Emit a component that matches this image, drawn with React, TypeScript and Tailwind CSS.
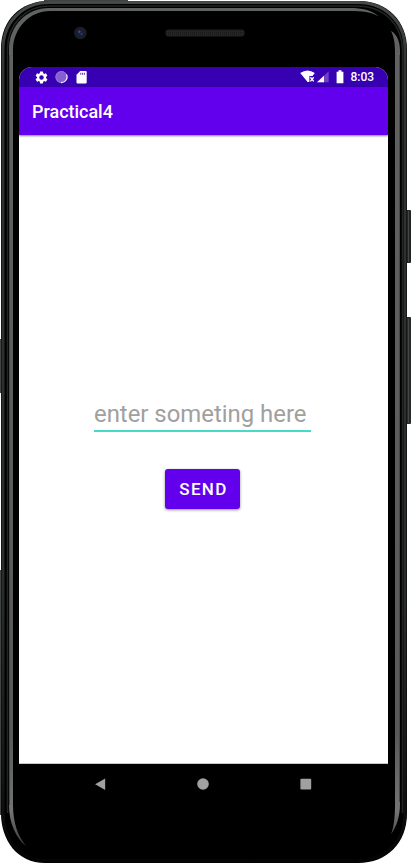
function DeviceFrame() {
  return (
    <svg className="absolute inset-0" width="411" height="863" viewBox="0 0 411 863" fill="none" aria-hidden="true">
      <defs>
        <linearGradient id="edge" x1="0" y1="0" x2="0" y2="863" gradientUnits="userSpaceOnUse">
          <stop offset="0" stopColor="#454948" />
          <stop offset=".08" stopColor="#303332" />
          <stop offset=".7" stopColor="#292c2b" />
          <stop offset=".9" stopColor="#151515" />
          <stop offset="1" stopColor="#030303" />
        </linearGradient>
        <linearGradient id="shine" x1="0" y1="0" x2="0" y2="863" gradientUnits="userSpaceOnUse">
          <stop offset="0" stopColor="#606362" />
          <stop offset=".85" stopColor="#595959" />
          <stop offset=".94" stopColor="#747474" />
          <stop offset="1" stopColor="#222" />
        </linearGradient>
        <pattern id="mesh" width="2" height="2" patternUnits="userSpaceOnUse">
          <rect width="2" height="2" fill="#242424" />
          <rect width="1" height="1" fill="#191919" />
        </pattern>
      </defs>
      <path d="M44 0H128V2H44zM0 339H1V393H0zM0 570H1V815H0z" fill="#414443" />
      <rect x="406" y="210" width="5" height="53" rx="1" fill="#222423" />
      <rect x="406" y="317" width="5" height="107" rx="1" fill="#282a29" />
      <path d="M408.5 211V262M408.5 319V423" stroke="#454746" />
      <path d="M1 48C1 20 21 1 48 1H359C387 1 407 21 407 49V813C407 843 387 863 358 863H45C17 863 1 840 1 813Z" fill="#000" />
      <path d="M3 813V49C3 22 23 2.5 49 2.5H358C385 2.5 405 22 405 49V813C405 842 386 860.5 358 860.5H45C19 860.5 3 839 3 813Z" stroke="url(#edge)" strokeWidth="3" />
      <path d="M7.5 813V49C7.5 24 26 6 49 6H356C384 6 402 24 402.5 50V813" stroke="#222524" strokeWidth="1.5" />
      <path d="M9 50C9 25 27 8 49 8H349C363 8 371 10 379 16.5C371 12 363 11 349 11H50C30 11 13 28 13 50V805C13 823 18 836 26 846C16 838 9 823 9 805Z" fill="url(#shine)" />
      <path d="M391 31C397 34 400 42 400 51V804C400 817 396 828 391 834C394 827 395 817 395 804V52C395 43 394 37 391 31Z" fill="url(#shine)" />
      <path d="M9.5 55V805M399.5 55V802" stroke="#484a49" />
      <circle cx="80.3" cy="33" r="6.3" fill="#1b1d1e" />
      <circle cx="80.3" cy="33" r="3.5" fill="#172044" />
      <circle cx="79.3" cy="31.8" r="1.2" fill="#364c85" />
      <circle cx="81.5" cy="34" r=".7" fill="#46588b" />
      <rect x="165.5" y="29.5" width="79" height="7" rx="3" fill="url(#mesh)" />
    </svg>
  );
}

function GearIcon() {
  return (
    <svg className="h-[15px] w-[15px]" viewBox="0 0 24 24" fill="white">
      <path d="M19.14 12.94c.04-.3.06-.61.06-.94s-.02-.64-.07-.94l2.03-1.58a.49.49 0 0 0 .12-.61l-1.92-3.32a.49.49 0 0 0-.59-.22l-2.39.96c-.5-.38-1.03-.7-1.62-.94l-.36-2.54a.48.48 0 0 0-.48-.41h-3.84a.48.48 0 0 0-.47.41l-.36 2.54c-.59.24-1.13.57-1.62.94l-2.39-.96a.49.49 0 0 0-.59.22L2.74 8.87a.48.48 0 0 0 .12.61l2.03 1.58a8 8 0 0 0 0 1.88l-2.03 1.58a.49.49 0 0 0-.12.61l1.92 3.32c.12.22.37.29.59.22l2.39-.96c.5.38 1.03.7 1.62.94l.36 2.54c.05.24.24.41.48.41h3.84c.24 0 .44-.17.47-.41l.36-2.54c.59-.24 1.13-.56 1.62-.94l2.39.96c.22.08.47 0 .59-.22l1.92-3.32a.49.49 0 0 0-.12-.61zM12 15.6A3.6 3.6 0 1 1 12 8.4a3.6 3.6 0 0 1 0 7.2z" />
    </svg>
  );
}

function StatusBar() {
  return (
    <div className="flex h-5 shrink-0 items-center bg-[#3700b3] pl-[14.5px] pr-[13.5px]">
      <GearIcon />
      <svg className="ml-[6.5px] h-[13px] w-[13px]" viewBox="0 0 13 13">
        <circle cx="6.2" cy="6" r="5.9" fill="#8660cf" />
        <path d="M11.3 3.3A5.5 5.5 0 0 1 6 11.5" stroke="#eee5ff" strokeWidth="1.3" fill="none" />
        <path d="M6 11.5A5.5 5.5 0 1 1 11.3 3.3" stroke="#9878d6" strokeWidth=".9" fill="none" />
      </svg>
      <svg className="ml-[8px] h-[13px] w-[11px]" viewBox="0 0 11 13">
        <path d="M4.2.1H9.6Q10.7.1 10.7 1.2V11.5Q10.7 12.6 9.6 12.6H1.6Q.5 12.6.5 11.5V3.8Z" fill="white" />
        <path d="M4.8 1.8V3.8M6.6 1.8V3.8M8.4 1.8V3.8" stroke="#5c2fc1" strokeWidth="1" />
      </svg>
      <div className="ml-auto flex h-full items-center">
        <svg className="h-[14px] w-[30px]" viewBox="0 0 30 14">
          <path d="M.2 3.1Q7.5-2 14.8 3.1L12.5 6H9.4V12.1H7.6Z" fill="white" />
          <path d="m10.4 7.2 3.3 4.2m0-4.2-3.3 4.2" stroke="white" strokeWidth="1.4" />
          <path d="M28.7 1.2V12.3H17Z" fill="#7040c8" />
          <path d="M24 5.7V12.3H17Z" fill="white" />
        </svg>
        <svg className="ml-[6px] h-[14px] w-2" viewBox="0 0 8 14">
          <path d="M2.5.2H5.5V1.8H7.4V13.2H.6V1.8H2.5Z" fill="white" />
        </svg>
        <span className="ml-[6.5px] w-6 whitespace-nowrap text-[12px] font-medium leading-5 text-white">8:03</span>
      </div>
    </div>
  );
}

function NavigationBar() {
  return (
    <nav className="flex h-10 shrink-0 items-center bg-black pl-[75px]">
      <button aria-label="Back">
        <svg width="13" height="13" viewBox="0 0 13 13"><path d="M1.1 6.3 11.2.5V12.1Z" fill="#a0a0a0" /></svg>
      </button>
      <button aria-label="Home" className="ml-[90px]">
        <svg width="13" height="13" viewBox="0 0 13 13"><circle cx="6" cy="6" r="5.8" fill="#a0a0a0" /></svg>
      </button>
      <button aria-label="Overview" className="ml-[90px]">
        <svg width="13" height="13" viewBox="0 0 13 13"><rect x=".4" y=".8" width="10.8" height="10.8" rx="1" fill="#a0a0a0" /></svg>
      </button>
    </nav>
  );
}

export default function App() {
  return (
    <div className="relative h-[863px] w-[411px] overflow-hidden bg-white font-[Roboto,sans-serif]">
      <DeviceFrame />
      <div className="relative flex h-full flex-col pb-[59px] pl-[19px] pr-[23px] pt-[67px]">
        <main className="flex min-h-0 flex-1 flex-col overflow-hidden rounded-t-[13px] bg-white">
          <StatusBar />
          <header className="z-10 flex h-[47.5px] shrink-0 items-center bg-[#6200ee] pl-[13px] pt-[2px] shadow-[0_1px_2px_rgba(0,0,0,.5)]">
            <h1 className="text-[17.95px] font-medium leading-6 text-white">Practical4</h1>
          </header>
          <section className="flex min-h-0 flex-1 flex-col items-center border-b border-[#c8c8c8] pt-[261.5px]">
            <input
              aria-label="Message"
              placeholder="enter someting here"
              className="mr-[2px] h-[36px] w-[217px] border-b-2 border-[#47dac9] bg-transparent pt-[1px] text-[23.9px] leading-7 text-black outline-none placeholder:text-[#a0a0a0] placeholder:opacity-100"
            />
            <button className="mr-[2px] mt-[37px] h-[39.5px] w-[75px] rounded-[3px] bg-[#6200ee] pl-[2px] pt-[2px] text-[17px] font-medium tracking-[1.35px] text-white shadow-[0_1px_3px_rgba(0,0,0,.45)]">SEND</button>
          </section>
          <NavigationBar />
        </main>
      </div>
    </div>
  );
}
